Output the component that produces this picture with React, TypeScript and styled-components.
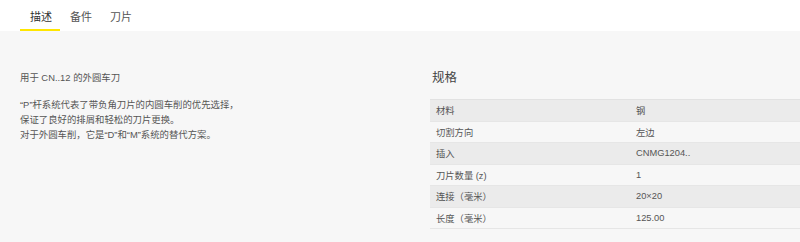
import React from 'react';
import styled, { createGlobalStyle } from 'styled-components';

const GlobalStyle = createGlobalStyle`
  html, body {
    margin: 0;
    padding: 0;
    background: #f7f7f7;
  }
  body {
    font-family: "Liberation Sans", "Noto Sans CJK SC", sans-serif;
    color: #555;
  }
`;

const TabBar = styled.div`
  display: flex;
  height: 31px;
  padding-left: 20px;
  background: #fff;
  box-sizing: border-box;
`;

const Tab = styled.div<{ $active?: boolean }>`
  width: 40px;
  display: flex;
  align-items: center;
  justify-content: center;
  font-size: 11px;
  color: ${(p) => (p.$active ? '#333' : '#555')};
  border-bottom: 2px solid ${(p) => (p.$active ? '#ffe600' : 'transparent')};
  box-sizing: border-box;
  padding: 2px 0 0 2px;
`;

const Main = styled.div`
  display: grid;
  grid-template-columns: 390px 1fr;
  column-gap: 20px;
  padding: 40px 0 15px 20px;
  min-height: 211px;
  box-sizing: border-box;
`;

const Description = styled.div`
  font-size: 9.4px;
  line-height: 14.7px;
  color: #555;
`;

const Lead = styled.p`
  margin: 0 0 12.5px;
`;

const Body = styled.p`
  margin: 0;
`;

const Heading = styled.h3`
  margin: -1px 0 13px 2px;
  font-size: 12.5px;
  line-height: 16px;
  font-weight: normal;
  color: #444;
`;

const SpecTable = styled.div`
  border-top: 1px solid #e2e2e2;
`;

const Row = styled.div<{ $shade?: boolean }>`
  display: grid;
  grid-template-columns: 200px 1fr;
  height: 21.5px;
  align-items: center;
  background: ${(p) => (p.$shade ? '#ebebeb' : '#f7f7f7')};
  border-bottom: 1px solid #e6e6e6;
  box-sizing: border-box;
  font-size: 9.3px;
  color: #555;
`;

const Cell = styled.div`
  padding-left: 6px;
`;

const specs: [string, string][] = [
  ['材料', '钢'],
  ['切割方向', '左边'],
  ['插入', 'CNMG1204..'],
  ['刀片数量 (z)', '1'],
  ['连接（毫米）', '20×20'],
  ['长度（毫米）', '125.00'],
];

export default function App() {
  return (
    <>
      <GlobalStyle />
      <TabBar>
        <Tab $active>描述</Tab>
        <Tab>备件</Tab>
        <Tab>刀片</Tab>
      </TabBar>
      <Main>
        <Description>
          <Lead>用于 CN..12 的外圆车刀</Lead>
          <Body>
            “P”杆系统代表了带负角刀片的内圆车削的优先选择，
            <br />
            保证了良好的排屑和轻松的刀片更换。
            <br />
            对于外圆车削，它是“D”和“M”系统的替代方案。
          </Body>
        </Description>
        <div>
          <Heading>规格</Heading>
          <SpecTable>
            {specs.map(([label, value], i) => (
              <Row key={label} $shade={i % 2 === 0}>
                <Cell>{label}</Cell>
                <Cell>{value}</Cell>
              </Row>
            ))}
          </SpecTable>
        </div>
      </Main>
    </>
  );
}
